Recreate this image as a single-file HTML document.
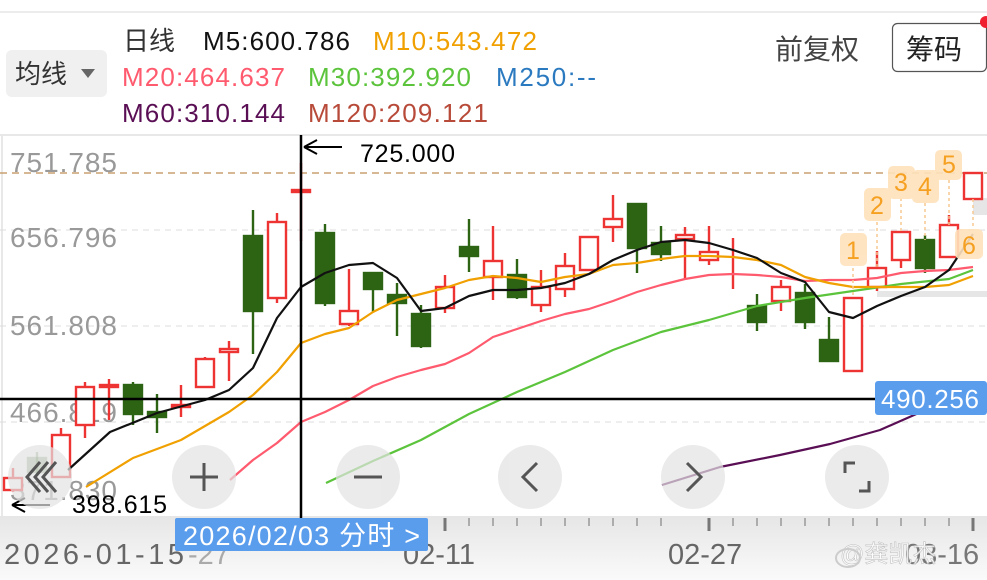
<!DOCTYPE html>
<html><head><meta charset="utf-8"><style>
html,body{margin:0;padding:0;background:#fff;width:987px;height:580px;overflow:hidden}
svg{display:block}
text{font-family:"Liberation Sans","Noto Sans CJK SC",sans-serif}
</style></head><body>
<svg width="987" height="580" viewBox="0 0 987 580" xmlns="http://www.w3.org/2000/svg">
<defs>
<linearGradient id="bg" x1="0" y1="0" x2="0" y2="1"><stop offset="0" stop-color="#e6e6e6"/><stop offset="1" stop-color="#fafafa"/></linearGradient>
</defs>
<rect width="987" height="580" fill="#fff"/>
<line x1="0" y1="12" x2="987" y2="12" stroke="#e6e6e6" stroke-width="1.5"/>
<rect x="6" y="50" width="101" height="47" rx="6" fill="#f0f0f0"/>
<text x="15" y="83" font-size="26" fill="#333" font-family="Noto Sans CJK SC,sans-serif">均线</text>
<path d="M81 69 L95 69 L88 78 Z" fill="#666"/>
<text x="123" y="50" font-size="26" fill="#333" font-family="Noto Sans CJK SC,sans-serif">日线</text>
<text x="203" y="50" font-size="26" fill="#111" textLength="147">M5:600.786</text>
<text x="373" y="50" font-size="26" fill="#f0a000" textLength="164">M10:543.472</text>
<text x="122" y="86" font-size="26" fill="#ff5a6e" textLength="163">M20:464.637</text>
<text x="308" y="86" font-size="26" fill="#5cc43c" textLength="163">M30:392.920</text>
<text x="496" y="86" font-size="26" fill="#2b7ac0" textLength="100">M250:--</text>
<text x="122" y="122" font-size="26" fill="#5a0f55" textLength="163">M60:310.144</text>
<text x="308" y="122" font-size="26" fill="#b84a3a" textLength="180">M120:209.121</text>
<text x="775" y="59" font-size="28" fill="#444" font-family="Noto Sans CJK SC,sans-serif">前复权</text>
<rect x="892.5" y="23.5" width="94" height="48" rx="5" fill="#fff" stroke="#555" stroke-width="1.2"/>
<text x="906" y="59" font-size="28" fill="#222" font-family="Noto Sans CJK SC,sans-serif">筹码</text>
<circle cx="986" cy="22" r="6" fill="#f02030"/>
<line x1="0" y1="135" x2="987" y2="135" stroke="#e8e8e8" stroke-width="2"/>
<line x1="2" y1="135" x2="2" y2="516" stroke="#e8e8e8" stroke-width="2"/>
<rect x="0" y="516" width="987" height="64" fill="url(#bg)"/>
<g stroke="#ddd" stroke-dasharray="6,5" stroke-width="1">
<line x1="0" y1="230" x2="987" y2="230"/><line x1="0" y1="326" x2="987" y2="326"/><line x1="0" y1="422" x2="987" y2="422"/>
</g>
<line x1="0" y1="173" x2="987" y2="173" stroke="#c8a070" stroke-dasharray="7,5" stroke-width="1.5"/>
<g font-size="28" fill="#999">
<text x="10" y="172" textLength="107">751.785</text>
<text x="10" y="247" textLength="107">656.796</text>
<text x="10" y="335" textLength="107">561.808</text>
<text x="10" y="422" textLength="107">466.819</text>
<text x="10" y="500" textLength="107">371.830</text>
</g>
<rect x="877" y="291" width="110" height="6" fill="#e6e6e6"/>
<rect x="973" y="198" width="14" height="17" fill="#e6e6e6"/>
<g stroke-width="2.4">
<g stroke="#ee3333" fill="#fff">
<line x1="13" y1="468" x2="13" y2="492"/><rect x="4" y="478" width="18" height="12"/>
<line x1="61" y1="428" x2="61" y2="478"/><rect x="52" y="435" width="18" height="42"/>
<line x1="85" y1="382" x2="85" y2="438"/><rect x="76" y="387" width="18" height="38"/>
<line x1="109" y1="379" x2="109" y2="420"/><rect x="100" y="385" width="18" height="2"/>
<line x1="181" y1="385" x2="181" y2="417"/><rect x="172" y="405" width="18" height="2"/>
<line x1="205" y1="357" x2="205" y2="387"/><rect x="196" y="359" width="18" height="28"/>
<line x1="229" y1="341" x2="229" y2="381"/><rect x="220" y="349" width="18" height="3"/>
<line x1="277" y1="213" x2="277" y2="303"/><rect x="268" y="222" width="18" height="76"/>
<line x1="301" y1="163" x2="301" y2="241"/><rect x="292" y="190" width="18" height="2"/>
<line x1="349" y1="269" x2="349" y2="326"/><rect x="340" y="311" width="18" height="13"/>
<line x1="445" y1="275" x2="445" y2="313"/><rect x="436" y="287" width="18" height="21"/>
<line x1="493" y1="226" x2="493" y2="300"/><rect x="484" y="261" width="18" height="16"/>
<line x1="541" y1="270" x2="541" y2="312"/><rect x="532" y="287" width="18" height="18"/>
<line x1="565" y1="253" x2="565" y2="297"/><rect x="556" y="266" width="18" height="23"/>
<rect x="580" y="237" width="18" height="33"/>
<line x1="613" y1="195" x2="613" y2="242"/><rect x="604" y="219" width="18" height="8"/>
<line x1="685" y1="227" x2="685" y2="279"/><rect x="676" y="235" width="18" height="4"/>
<line x1="709" y1="226" x2="709" y2="265"/><rect x="700" y="252" width="18" height="8"/>
<line x1="733" y1="238" x2="733" y2="289"/>
<line x1="781" y1="280" x2="781" y2="311"/><rect x="772" y="287" width="18" height="14"/>
<rect x="844" y="298" width="18" height="73"/>
<line x1="877" y1="251" x2="877" y2="291"/><rect x="868" y="268" width="18" height="19"/>
<line x1="901" y1="232" x2="901" y2="268"/><rect x="892" y="232" width="18" height="28"/>
<line x1="949" y1="215" x2="949" y2="257"/><rect x="940" y="225" width="18" height="32"/>
<rect x="964" y="173" width="18" height="26"/>
</g>
<g stroke="#2d6414" fill="#2d6414">
<line x1="37" y1="452" x2="37" y2="476" opacity=".4"/><rect x="28" y="458" width="18" height="14" opacity=".4"/>
<line x1="133" y1="382" x2="133" y2="425"/><rect x="124" y="385" width="18" height="29"/>
<line x1="157" y1="394" x2="157" y2="433"/><rect x="148" y="412" width="18" height="5"/>
<line x1="253" y1="210" x2="253" y2="354"/><rect x="244" y="236" width="18" height="75"/>
<line x1="325" y1="224" x2="325" y2="306"/><rect x="316" y="233" width="18" height="70"/>
<line x1="373" y1="272" x2="373" y2="312"/><rect x="364" y="273" width="18" height="16"/>
<line x1="397" y1="283" x2="397" y2="336"/><rect x="388" y="295" width="18" height="8"/>
<line x1="421" y1="305" x2="421" y2="348"/><rect x="412" y="314" width="18" height="32"/>
<line x1="469" y1="219" x2="469" y2="272"/><rect x="460" y="247" width="18" height="9"/>
<line x1="517" y1="259" x2="517" y2="299"/><rect x="508" y="275" width="18" height="22"/>
<line x1="637" y1="203" x2="637" y2="273"/><rect x="628" y="204" width="18" height="44"/>
<line x1="661" y1="226" x2="661" y2="261"/><rect x="652" y="243" width="18" height="11"/>
<line x1="757" y1="294" x2="757" y2="331"/><rect x="748" y="306" width="18" height="16"/>
<line x1="805" y1="284" x2="805" y2="329"/><rect x="796" y="293" width="18" height="29"/>
<line x1="829" y1="317" x2="829" y2="361"/><rect x="820" y="340" width="18" height="21"/>
<line x1="925" y1="235" x2="925" y2="273"/><rect x="916" y="240" width="18" height="28"/>
</g>
</g>
<g fill="none" stroke-width="2.2" stroke-linejoin="round">
<polyline stroke="#5a0f55" points="662,485 720,467 780,455 830,444 880,430 930,408"/>
<polyline stroke="#5cc43c" points="326,483 373,461 421,440 469,414 517,392 565,372 613,350 661,332 709,320 757,306 805,298 853,291 901,284 949,279 973,270"/>
<polyline stroke="#ff5a6e" points="230,480 253,460 277,443 301,422 325,412 349,400 373,386 397,377 421,370 445,364 469,353 493,337 517,329 541,321 565,314 589,309 613,301 637,292 661,285 685,279 709,275 733,274 757,275 781,277 805,281 829,280 853,280 877,278 901,273 925,271 949,270 973,267"/>
<polyline stroke="#f0a000" points="86,487 133,458 181,440 229,412 253,395 277,372 301,343 325,334 349,328 373,312 397,300 421,294 445,288 469,280 493,276 517,278 541,282 565,277 589,274 613,265 637,263 661,259 685,256 709,256 733,257 757,260 781,265 805,277 829,283 853,287 877,287 901,287 925,287 949,285 973,276"/>
<polyline stroke="#111" points="68,470 110,432 157,413 205,400 229,390 253,368 277,318 301,287 325,273 349,265 373,263 397,278 421,311 445,308 469,296 493,290 517,290 541,288 565,283 589,274 613,260 637,250 661,242 685,240 709,243 733,250 757,258 781,273 805,282 829,312 853,318 877,306 901,296 925,287 949,270 973,234"/>
</g>
<g stroke="#f8c890" stroke-width="1.5" stroke-dasharray="3,3">
<line x1="853" y1="268" x2="853" y2="298"/><line x1="877" y1="222" x2="877" y2="268"/><line x1="901" y1="198" x2="901" y2="232"/><line x1="925" y1="203" x2="925" y2="240"/><line x1="949" y1="180" x2="949" y2="225"/><line x1="973" y1="199" x2="973" y2="229"/>
</g>
<g fill="#ffe2bc" opacity=".9">
<rect x="840" y="233" width="27" height="33" rx="5"/><rect x="864" y="188" width="27" height="33" rx="5"/><rect x="888" y="166" width="27" height="33" rx="5"/><rect x="912" y="170" width="27" height="33" rx="5"/><rect x="935" y="150" width="27" height="30" rx="5"/><rect x="955" y="229" width="28" height="30" rx="5"/>
</g>
<g font-size="25" fill="#f5a020" text-anchor="middle">
<text x="853" y="259">1</text><text x="877" y="214">2</text><text x="901" y="191">3</text><text x="925" y="195">4</text><text x="949" y="173">5</text><text x="969" y="254">6</text>
</g>
<line x1="0" y1="399" x2="876" y2="399" stroke="#000" stroke-width="2.5"/>
<line x1="301" y1="135" x2="301" y2="518" stroke="#000" stroke-width="2.5"/>
<rect x="875" y="381" width="112" height="34" rx="3" fill="#5b9ded"/>
<text x="881" y="408" font-size="26" fill="#fff" textLength="98">490.256</text>
<path d="M304 147 L342 147 M304 147 L317 140 M304 147 L317 154" stroke="#000" stroke-width="2" fill="none"/>
<text x="360" y="162" font-size="25" fill="#000" textLength="95">725.000</text>
<path d="M12 505 L50 505 M12 505 L25 498 M12 505 L25 512" stroke="#000" stroke-width="2" fill="none"/>
<text x="72" y="513" font-size="25" fill="#000" textLength="95">398.615</text>
<g fill="#e2e2e2" opacity=".7">
<circle cx="40" cy="477" r="32"/><circle cx="204" cy="477" r="32"/><circle cx="368" cy="477" r="32"/><circle cx="530" cy="477" r="32"/><circle cx="693" cy="477" r="32"/><circle cx="857" cy="477" r="32"/>
</g>
<g stroke="#555" stroke-width="3" fill="none">
<path d="M40 462 L27 477 L40 492 M48 462 L35 477 L48 492 M56 462 L43 477 L56 492"/>
<path d="M190 477 L218 477 M204 463 L204 491"/>
<path d="M354 477 L382 477"/>
<path d="M537 463 L523 477 L537 491"/>
<path d="M687 463 L701 477 L687 491"/>
<path d="M845 473 L845 463 L855 463 M869 481 L869 491 L859 491"/>
</g>
<g stroke="#999" stroke-width="1.5">
<line x1="205" y1="518" x2="205" y2="526"/><line x1="229" y1="518" x2="229" y2="526"/><line x1="253" y1="518" x2="253" y2="526"/><line x1="277" y1="518" x2="277" y2="526"/><line x1="325" y1="518" x2="325" y2="526"/><line x1="349" y1="518" x2="349" y2="526"/><line x1="373" y1="518" x2="373" y2="526"/><line x1="397" y1="518" x2="397" y2="526"/><line x1="469" y1="518" x2="469" y2="526"/><line x1="493" y1="518" x2="493" y2="526"/><line x1="517" y1="518" x2="517" y2="526"/><line x1="541" y1="518" x2="541" y2="526"/><line x1="565" y1="518" x2="565" y2="526"/><line x1="589" y1="518" x2="589" y2="526"/><line x1="613" y1="518" x2="613" y2="526"/><line x1="637" y1="518" x2="637" y2="526"/><line x1="661" y1="518" x2="661" y2="526"/><line x1="733" y1="518" x2="733" y2="526"/><line x1="757" y1="518" x2="757" y2="526"/><line x1="781" y1="518" x2="781" y2="526"/><line x1="805" y1="518" x2="805" y2="526"/><line x1="829" y1="518" x2="829" y2="526"/><line x1="853" y1="518" x2="853" y2="526"/><line x1="877" y1="518" x2="877" y2="526"/><line x1="901" y1="518" x2="901" y2="526"/><line x1="925" y1="518" x2="925" y2="526"/><line x1="949" y1="518" x2="949" y2="526"/>
</g>
<g stroke="#777" stroke-width="3">
<line x1="445" y1="518" x2="445" y2="531"/><line x1="709" y1="518" x2="709" y2="531"/><line x1="973" y1="518" x2="973" y2="531"/>
</g>
<g font-size="29" fill="#666">
<text x="4" y="564" textLength="180">2026-01-15</text>
<text x="188" y="564" fill="#aaa">-27</text>
<text x="403" y="564">02-11</text>
<text x="668" y="564">02-27</text>
<text x="905" y="564" fill="#777">03-16</text>
</g>
<rect x="175" y="518" width="253" height="33" rx="2" fill="#5b9ded"/>
<text x="183" y="545" font-size="27" fill="#fff" textLength="237" font-family="Liberation Sans,Noto Sans CJK SC,sans-serif">2026/02/03  分时  &gt;</text>
<text x="840" y="562" font-size="24" fill="#fff" stroke="#bbb" stroke-width=".6" opacity=".85" font-family="Noto Sans CJK SC,sans-serif">@龚凯杰</text>
<ellipse cx="848" cy="558" rx="12" ry="9" fill="none" stroke="#ccc" stroke-width="2"/>
</svg>
</body></html>
